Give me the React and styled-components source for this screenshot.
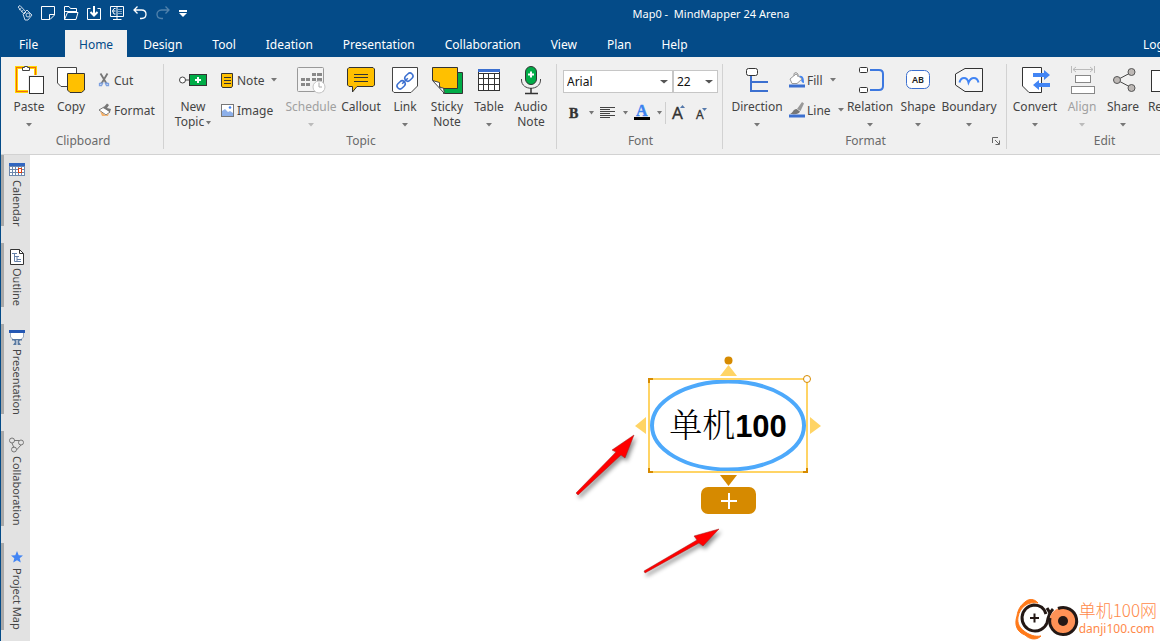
import React from 'react';
import styled, { createGlobalStyle } from 'styled-components';

const GlobalStyle = createGlobalStyle`
    * {
        box-sizing: border-box;
    }

    body {
        margin: 0;
        overflow: hidden;
        background: #FFFFFF;
        font-family: 'Noto Sans', 'Noto Sans CJK SC', sans-serif;
        font-size: 12px;
        color: #444444;
    }

    button,
    select {
        margin: 0;
        padding: 0;
        border: none;
        background: none;
        font: inherit;
        color: inherit;
    }

    svg {
        display: block;
        flex: none;
        overflow: visible;
    }
`;

const Window = styled.div`
    display: flex;
    flex-direction: column;
    height: 100vh;
    overflow: hidden;
    border-left: 1px solid #044B88;
`;

const TitleBar = styled.header`
    display: flex;
    align-items: center;
    height: 26px;
    padding-left: 12px;
    background: #044B88;
    color: #FFFFFF;
`;

const QuickButton = styled.button`
    width: ${props => props.$narrow ? '18px' : '23px'};
    height: 20px;
    display: flex;
    align-items: center;
    justify-content: center;
    opacity: ${props => props.disabled ? 0.3 : 1};
`;

const Title = styled.h1`
    flex: 1;
    margin: 0;
    padding-left: 70px;
    text-align: center;
    font-size: 11px;
    font-weight: 400;
    white-space: pre;
`;

const TabBar = styled.nav`
    display: flex;
    height: 31px;
    padding: 4px 0 0 4px;
    overflow: hidden;
    background: #044B88;
`;

const Tab = styled.button`
    flex: none;
    height: 27px;
    margin-right: 2px;
    padding: 2px 14px 0;
    white-space: nowrap;
    background: ${props => props.$active ? '#F0F0F0' : 'transparent'};
    color: ${props => props.$active ? '#044B88' : '#FFFFFF'};
`;

const FileTab = styled(Tab)`
    width: 58px;
    text-align: left;
`;

const LoginButton = styled(Tab)`
    width: 17px;
    margin: 0 0 0 auto;
    padding: 2px 0 0;
    text-align: left;
`;

const Ribbon = styled.div`
    display: flex;
    flex: none;
    height: 98px;
    padding-top: 7px;
    overflow: hidden;
    background: #F0F0F0;
    border-bottom: 1px solid #D2D2D2;
`;

const Group = styled.section`
    flex: none;
    width: ${props => props.$width}px;
    height: 85px;
    display: flex;
    flex-direction: column;
    border-right: 1px solid #D2D2D2;
`;

const GroupBody = styled.div`
    display: flex;
    height: 69px;
    padding-left: ${props => props.$pad || 7}px;
`;

const GroupFooter = styled.div`
    display: grid;
    grid-template-columns: 1fr auto 1fr;
    align-items: center;
    height: 16px;
    padding-right: 6px;
    padding-left: 8px;
    line-height: 16px;
    color: #6A6A6A;
`;

const GroupLabel = styled.span`
    grid-column: 2;
`;

const Launcher = styled.button`
    justify-self: end;
`;

const BigButton = styled.button`
    flex: none;
    display: flex;
    flex-direction: column;
    align-items: center;
    width: ${props => props.$width || 42}px;
    line-height: 15px;
    color: ${props => props.disabled ? '#A0A0A0' : '#444444'};
`;

const BigLabel = styled.span`
    margin: 3px 0 9px;
    white-space: pre;
    text-align: center;
`;

const InlineCaret = styled.span`
    display: inline-block;
    margin-left: 2px;
    vertical-align: middle;
`;

const SmallColumn = styled.div`
    flex: none;
    width: ${props => props.$width}px;
    padding: 1px 0 0 ${props => props.$pad}px;
`;

const SmallButton = styled.button`
    display: flex;
    align-items: center;
    height: 30px;
    white-space: nowrap;
`;

const SmallLabel = styled.span`
    margin: 0 7px 0 2px;
`;

const FontPanel = styled.div`
    flex: 1;
    padding: 6px 4px 0 0;
`;

const SelectRow = styled.div`
    display: flex;
`;

const SelectBox = styled.label`
    display: grid;
    align-items: center;
    width: ${props => props.$width}px;
    height: 23px;
    border: 1px solid #C6C6C6;
    background: #FFFFFF;

    > * {
        grid-area: 1 / 1;
    }

    svg {
        justify-self: end;
        margin-right: 4px;
        pointer-events: none;
    }
`;

const Select = styled.select`
    width: 100%;
    height: 100%;
    padding-left: 3px;
    appearance: none;
    font-size: 12px;
    color: #111111;
`;

const FormatRow = styled.div`
    display: flex;
    align-items: center;
    height: 24px;
    margin-top: 8px;
`;

const FormatButton = styled.button`
    display: flex;
    align-items: center;
    justify-content: space-between;
    width: ${props => props.$width}px;
    height: 22px;
    padding-left: ${props => props.$pad || 4}px;
`;

const RowDivider = styled.span`
    width: 1px;
    height: 22px;
    margin-left: 3px;
    background: #CFCFCF;
`;

const Main = styled.main`
    flex: 1;
    display: flex;
    min-height: 0;
`;

const SideBar = styled.aside`
    flex: none;
    display: flex;
    flex-direction: column;
    align-items: stretch;
    gap: 17px;
    width: 29px;
    overflow: hidden;
    background: #E2E2E2;
`;

const SideTab = styled.button`
    flex: none;
    display: flex;
    flex-direction: column;
    align-items: center;
    gap: 3px;
    padding: 6px 1px 0 0;
    border-left: 3px solid #A9A9A9;
`;

const SideLabel = styled.span`
    writing-mode: vertical-rl;
    font-size: 11px;
    line-height: 16px;
    white-space: nowrap;
`;

const Canvas = styled.div`
    position: relative;
    flex: 1;
    overflow: hidden;
    background: #FFFFFF;
`;

const Topic = styled.div`
    position: absolute;
    left: 600px;
    top: 195px;
    width: 196px;
    height: 140px;
`;

const TopicText = styled.div`
    position: absolute;
    inset: 49px 0 auto 0;
    text-align: center;
    font-family: 'Liberation Sans', 'Noto Sans CJK SC', sans-serif;
    font-size: 31px;
    font-weight: 700;
    line-height: 48px;
    color: #000000;
`;

const TopicHan = styled.span`
    font-family: 'Noto Serif CJK SC', 'Noto Sans CJK SC', sans-serif;
    font-size: 33px;
    font-weight: 300;
`;

const AddButton = styled.button`
    position: absolute;
    left: 671px;
    top: 332px;
    display: flex;
    align-items: center;
    justify-content: center;
    width: 55px;
    height: 27px;
    border-radius: 7px;
    background: #D68A00;
`;

const Pointer = styled.svg`
    position: absolute;
    left: ${props => props.$x}px;
    top: ${props => props.$y}px;
    filter: drop-shadow(2px 3px 2px rgba(0, 0, 0, 0.45));
`;

const Watermark = styled.div`
    position: absolute;
    right: 3px;
    bottom: 1px;
    display: flex;
    align-items: center;
    color: #FF8A4A;
    white-space: nowrap;
`;

const WatermarkName = styled.div`
    font-family: 'Noto Sans CJK SC', sans-serif;
    font-size: 17px;
    font-weight: 300;
    line-height: 20px;
`;

const WatermarkSite = styled.div`
    font-family: 'Noto Sans', sans-serif;
    font-size: 12px;
    line-height: 17px;
`;

const Caret = ({ color = '#777777', size = 6 }) => (
    <svg width={size} height='4' viewBox='0 0 6 4' preserveAspectRatio='none'>
        <path d='M0 0H6L3 3.5Z' fill={color} />
    </svg>
);

const Icon = ({ size = 32, children, ...rest }) => (
    <svg width={size} height={size} viewBox={`0 0 ${size} ${size}`} fill='none' {...rest}>
        {children}
    </svg>
);

const PasteIcon = () => (
    <Icon>
        <rect x='4' y='4' width='18' height='23' fill='#FFF' stroke='#FFD800' strokeWidth='4' />
        <rect x='3.5' y='3.5' width='19' height='24' stroke='#F26A10' />
        <rect x='5' y='5' width='16' height='21' fill='#FFF' />
        <path d='M15 11H25V31H15Z' fill='#F0F0F0' />
        <path d='M9.5 6.5V3.5H11.5V2.5H14.5V3.5H16.5V6.5Z' fill='#FFF' stroke='#444' />
        <rect x='16.5' y='12.5' width='14' height='17' fill='#FFF' stroke='#333' />
    </Icon>
);

const CopyIcon = () => (
    <Icon>
        <path d='M2.5 3.5H21.5V22.5H6L2.5 19Z' fill='#FFF' stroke='#444' />
        <path d='M12.5 9.5H29.5V26L26.5 28.5H15L12.5 26Z' fill='#FFC000' stroke='#333' />
    </Icon>
);

const CutIcon = () => (
    <Icon size={14}>
        <path d='M2.5 0.5L7 8L8.5 10.5M9.5 0.5L5 8L3.5 10.5' stroke='#777' strokeWidth='1.8' />
        <path d='M3.5 10L1.500 10.500V12.500H3.500L5 9.500M8 10L10.500 10.500V12.500H8.500L7 9.500' stroke='#7CA0E0' strokeWidth='1.300' />
    </Icon>
);

const BrushIcon = () => (
    <Icon size={14}>
        <path d='M1 7L8 12L12 9L6 4Z' fill='#FFF' stroke='#777' />
        <path d='M5 5L9 0.5L11 2L9 5L13 6L12 9Z' fill='#777' />
        <path d='M2 8L8 12.5L11 10L10 13H4Z' fill='#F6B26B' />
    </Icon>
);

const NewTopicIcon = () => (
    <Icon>
        <circle cx='5.5' cy='16' r='3' fill='#FFF' stroke='#444' />
        <path d='M8.5 16H12' stroke='#444' />
        <rect x='12.5' y='10.5' width='17' height='11' fill='#00AC47' stroke='#333' />
        <path d='M18 16H24M21 13V19' stroke='#FFF' strokeWidth='2' />
    </Icon>
);

const NoteIcon = () => (
    <Icon size={15}>
        <path d='M1.5 0.5H12.5V13L11.5 14.5H2.5L1.5 13Z' fill='#FFC000' stroke='#333' />
        <path d='M4 4.5H11M4 7.5H11M4 10.5H11' stroke='#333' />
    </Icon>
);

const ImageIcon = () => (
    <Icon size={15}>
        <rect x='1.5' y='1.5' width='12' height='12' fill='#FFF' stroke='#777' />
        <path d='M2 8L5 6L8 9L10 8L13 10V13H2Z' fill='#8DB0EA' />
        <circle cx='10' cy='4.5' r='1.3' fill='#4285F4' />
    </Icon>
);

const ScheduleIcon = () => (
    <Icon>
        <rect x='2.5' y='3.5' width='26' height='24' rx='1' fill='#F3F3F3' stroke='#999' />
        <path d='M17 10.5H21M22 10.5H27M6 15.5H10M11 15.5H15M17 15.5H21M22 15.5H27M6 20.5H10M11 20.5H15' stroke='#888' strokeWidth='3' />
        <circle cx='24' cy='23' r='6' fill='#FFF' stroke='#C4C4C4' />
        <path d='M24 18.5V23H27' stroke='#AAA' />
    </Icon>
);

const CalloutIcon = () => (
    <Icon>
        <path d='M4 3.5H28L29.5 5V21L28 22.5H12L7.5 28V22.5H4L2.5 21V5Z' fill='#FFC000' stroke='#333' />
        <path d='M9 10.5H23M9 13.5H23M9 17.5H23' stroke='#333' />
    </Icon>
);

const LinkIcon = () => (
    <Icon>
        <path d='M3.5 3.5H28.5V22L22 28.5H5L3.5 27Z' fill='#FFF' stroke='#444' />
        <g transform='rotate(-45 16 17)' stroke='#3C70D0' strokeWidth='1.500'>
            <rect x='6' y='14' width='9' height='6' rx='3' />
            <rect x='17' y='14' width='9' height='6' rx='3' />
            <path d='M12 17H20' />
        </g>
    </Icon>
);

const StickyIcon = () => (
    <Icon>
        <path d='M12.5 8.5H31.5V29.5H12.5Z' fill='#00AC47' stroke='#333' />
        <path d='M1.5 3.5H26.5V24.5H11L1.5 16Z' fill='#FFC000' stroke='#333' />
        <path d='M1.5 16.5L13.5 29.5L12.500 24L8.5 23.500V18.500Z' fill='#FFF' stroke='#444' />
    </Icon>
);

const TableIcon = () => (
    <Icon shapeRendering='crispEdges'>
        <rect x='5.5' y='5.5' width='21' height='21' fill='#FFF' stroke='#333' />
        <path d='M5 9.5H27M5 14.5H27M5 20.5H27M10.5 9V27M15.5 9V27M21.5 9V27' stroke='#333' />
        <path d='M5 6.5H27' stroke='#3C70D0' strokeWidth='3' />
    </Icon>
);

const AudioIcon = () => (
    <Icon>
        <rect x='10.5' y='2.5' width='11' height='18' rx='5.5' fill='#00AC47' stroke='#333' />
        <path d='M13 10.5H19M16 7.5V13.5' stroke='#FFF' strokeWidth='2' />
        <path d='M6.5 15V16C6.5 27 25.5 27 25.5 16V15' stroke='#444' />
        <path d='M16 24V29M10 29.5H23' stroke='#333' strokeWidth='1.500' />
    </Icon>
);

const AlignLeftIcon = () => (
    <Icon size={15} shapeRendering='crispEdges'>
        <path d='M0 1.5H15M0 3.5H10M0 5.5H15M0 7.5H10M0 9.5H15M0 11.5H10' stroke='#444' />
    </Icon>
);

const BoldIcon = () => (
    <Icon size={14}>
        <text x='1' y='12' fill='#333' stroke='#333' strokeWidth='0.400' fontFamily='Liberation Serif, serif' fontWeight='700' fontSize='14'>B</text>
    </Icon>
);

const ColorIcon = () => (
    <Icon size={16}>
        <text x='2' y='11' fill='#3B82F0' stroke='#3B82F0' strokeWidth='0.400' fontFamily='Liberation Serif, serif' fontWeight='700' fontSize='16'>A</text>
        <path d='M0 13.5H16' stroke='#000' strokeWidth='3' />
    </Icon>
);

const GrowIcon = () => (
    <Icon size={16}>
        <text x='0' y='14' fill='#333' stroke='#333' strokeWidth='0.3' fontSize='17' fontFamily='Noto Sans, sans-serif'>A</text>
        <path d='M8 3L10.5 0L13 3Z' fill='#5478AA' />
    </Icon>
);

const ShrinkIcon = () => (
    <Icon size={16}>
        <text x='1' y='14' fill='#333' stroke='#333' strokeWidth='0.3' fontSize='12' fontFamily='Noto Sans, sans-serif'>A</text>
        <path d='M7 3H12L9.5 6Z' fill='#5478AA' />
    </Icon>
);

const DirectionIcon = () => (
    <Icon>
        <path d='M10 11V28M10 18H27M10 27H27' stroke='#3C70D0' strokeWidth='2' />
        <rect x='5.5' y='4.5' width='11' height='7' rx='2' fill='#FFF' stroke='#333' />
    </Icon>
);

const FillIcon = () => (
    <Icon size={16}>
        <path d='M10 4C14 3 15 6 15 11C12 11 13 8 11 7Z' fill='#4285F4' />
        <path d='M1 7L7 2L13 7L8 11.5H3Z' fill='#FFF' stroke='#999' />
        <path d='M5 4V1.5L7 0.5L9 2V5' stroke='#999' />
        <path d='M0 14H16' stroke='#3C70D0' strokeWidth='3' />
    </Icon>
);

const LineIcon = () => (
    <Icon size={16}>
        <path d='M8 7L13 0L15 1.5L11.5 9Z' fill='#999' />
        <path d='M1 12C4 11 4 7 7.5 7L11 9.5C10 12 7 12.5 3 12Z' fill='#777' />
        <path d='M0 14H16' stroke='#3C70D0' strokeWidth='3' />
    </Icon>
);

const RelationIcon = () => (
    <Icon>
        <rect x='5.5' y='3.5' width='8' height='5' rx='1' fill='#FFF' stroke='#333' />
        <rect x='5.5' y='23.5' width='8' height='5' rx='1' fill='#FFF' stroke='#333' />
        <path d='M16 6H25Q29 6 29 10V22Q29 26 25 26H16' stroke='#3C78E0' strokeWidth='2' />
    </Icon>
);

const ShapeIcon = () => (
    <Icon>
        <rect x='4.5' y='6.5' width='23' height='18' rx='5' fill='#FFF' stroke='#3C70D0' />
        <text x='16' y='19' textAnchor='middle' fill='#222' fontSize='9' fontWeight='600' fontFamily='Noto Sans, sans-serif'>AB</text>
    </Icon>
);

const BoundaryIcon = () => (
    <Icon>
        <path d='M12 4.5H29.5V27.5H12L2.5 21V10Z' fill='#F6F6F6' stroke='#333' />
        <path d='M6.500 18.500C8 12.500 14 12.500 15.500 18.500C18 12.500 24 12.500 25.500 18.500' stroke='#4285F4' strokeWidth='2' />
    </Icon>
);

const ConvertIcon = () => (
    <Icon>
        <path d='M3.5 3.5H22.5V28.5H10L3.500 22Z' fill='#FFF' stroke='#333' />
        <path d='M14 9H25V6L31 11L25 16V13H14Z' fill='#4285F4' />
        <path d='M31 19H20V16L14 21L20 26V23H31Z' fill='#4285F4' />
    </Icon>
);

const AlignIcon = () => (
    <Icon>
        <path d='M5.5 2V9M28.5 2V9M7 5.5H27M10 3L7 5.500L10 8M24 3L27 5.500L24 8' stroke='#BBB' />
        <rect x='9.5' y='11.500' width='15' height='7' fill='#FFF' stroke='#888' />
        <rect x='5.5' y='22.500' width='23' height='7' fill='#FFF' stroke='#888' />
    </Icon>
);

const ShareIcon = () => (
    <Icon>
        <path d='M25 8L10 16L25 24' stroke='#444' />
        <circle cx='10' cy='16' r='3.500' fill='#BDB8B5' stroke='#555' />
        <circle cx='24.500' cy='8' r='3.500' fill='#BDB8B5' stroke='#555' />
        <circle cx='24.500' cy='24' r='3.500' fill='#BDB8B5' stroke='#555' />
    </Icon>
);

const BoxIcon = () => (
    <Icon>
        <rect x='12.5' y='6.5' width='18' height='21' fill='#FFF' stroke='#333' />
    </Icon>
);

const CalendarIcon = () => (
    <Icon size={16} shapeRendering='crispEdges'>
        <rect x='0' y='2' width='16' height='13' fill='#6D87AC' />
        <rect x='0' y='2' width='16' height='3' fill='#3166C0' />
        <path d='M1 6H3V8H1ZM4 6H6V8H4ZM7 6H9V8H7ZM10 6H12V8H10ZM13 6H15V8H13ZM1 9H3V11H1ZM4 9H6V11H4ZM7 9H9V11H7ZM13 9H15V11H13ZM1 12H3V14H1ZM4 12H6V14H4ZM7 12H9V14H7ZM10 12H12V14H10ZM13 12H15V14H13Z' fill='#FFF' />
        <rect x='9.5' y='7.5' width='3' height='4' fill='#FFF' stroke='#E04010' />
    </Icon>
);

const OutlineIcon = () => (
    <Icon size={16}>
        <path d='M1.5 0.500H10.500L14.500 4.500V15.500H1.500Z' fill='#FFF' stroke='#333' />
        <path d='M10.500 0.500V4.500H14.500' stroke='#333' />
        <path d='M3 4.500H8M5.500 4.500V12.500M5.500 7.500H10M8 7.500V13M8 10.500H12M5.500 12.500H12' stroke='#6580A8' />
    </Icon>
);

const PresentationIcon = () => (
    <Icon size={16}>
        <path d='M1.5 2V7L4 9.500H12L14.500 7V2Z' fill='#FFF' stroke='#9AAAC0' />
        <rect x='0' y='0' width='16' height='3' fill='#2558B4' />
        <path d='M3 9H13V10.500H11L10 12L12 15H4L6 12L5 10.500H3Z' fill='#5878A0' />
        <path d='M8 10V15' stroke='#FFF' />
    </Icon>
);

const CollabIcon = () => (
    <Icon size={16} stroke='#777'>
        <path d='M5 3.500L10 3.500M3 6L5 11M7.500 13L12 8' />
        <circle cx='3' cy='3.500' r='2.500' />
        <circle cx='12' cy='5.500' r='2.500' />
        <circle cx='5' cy='12.500' r='2.500' />
    </Icon>
);

const StarIcon = () => (
    <Icon size={16}>
        <path d='M8 2L9.700 6.200L14 6.500L10.700 9.300L11.800 13.500L8 11.200L4.200 13.500L5.300 9.300L2 6.500L6.300 6.200Z' fill='#4285F4' />
    </Icon>
);

const quickTools = [
    { name: 'Application', icon: <Icon size={16} stroke='#C9D8E8'><path d='M1 2L3 0.500L9 7L7 9Z' /><path d='M2 5L4.500 3M4 7L6.500 5' /><path d='M6 9L10 5L15 10L11 15H8Z' /><circle cx='11' cy='10' r='2' /></Icon> },
    { name: 'New', icon: <Icon size={16} stroke='#FFF'><path d='M1.500 1.500H14.500V10L10 14.500H1.500Z' /><path d='M14.500 9.500H9.500V14.500' /></Icon> },
    { name: 'Open', icon: <Icon size={16} stroke='#FFF'><path d='M1.500 14.500V1.500H6L7.500 3.500H13.500V7.500M1.500 14.500L4.500 7.500H15L13 14.500ZM1.500 6.500H13.500' /></Icon> },
    { name: 'Save', icon: <Icon size={16} stroke='#FFF'><path d='M4.500 3.500H1.500V14.500H14.500V3.500H11.500' /><path d='M8 1V10M4.500 7L8 10.500L11.500 7' strokeWidth='2' /></Icon> },
    { name: 'Present', icon: <Icon size={16} stroke='#FFF'><path d='M1.500 1.500H14.500V11.500H1.500ZM8 1V15M4 14.500H12.500M6.500 3.500H5L3.500 6L5 9H6.500M3.500 6H6.500' /><path d='M9.500 4.500H13M9.500 6.500H13M9.500 8.500H13' strokeDasharray='1 1' /></Icon> },
    { name: 'Undo', icon: <Icon size={16} stroke='#FFF' strokeWidth='1.300'><path d='M5.500 1.500L2 5L5.500 8.500M2 5H9.500C15.500 5 15.500 13.500 9.500 13.500H8' /></Icon> },
    { name: 'Redo', disabled: true, icon: <Icon size={16} stroke='#FFF' strokeWidth='1.300'><path d='M10.500 1.500L14 5L10.500 8.500M14 5H6.500C0.500 5 0.500 13.500 6.500 13.500H8' /></Icon> },
    { name: 'Customize', narrow: true, icon: <svg width='8' height='7' viewBox='0 0 8 7'><path d='M0 0H8V2H0ZM0 3H8L4 7Z' fill='#FFF' /></svg> },
];

const tabs = ['Home', 'Design', 'Tool', 'Ideation', 'Presentation', 'Collaboration', 'View', 'Plan', 'Help'];

const sideTabs = [
    { name: 'Calendar', icon: <CalendarIcon /> },
    { name: 'Outline', icon: <OutlineIcon /> },
    { name: 'Presentation', icon: <PresentationIcon /> },
    { name: 'Collaboration', icon: <CollabIcon /> },
    { name: 'Project Map', icon: <StarIcon /> },
];

const Big = ({ icon, label, caret, width, disabled }) => (
    <BigButton $width={width} disabled={disabled}>
        {icon}
        <BigLabel>{label}</BigLabel>
        {caret && <Caret color={disabled ? '#BBBBBB' : '#777777'} />}
    </BigButton>
);

const Small = ({ icon, label, caret }) => (
    <SmallButton>
        {icon}
        <SmallLabel>{label}</SmallLabel>
        {caret && <Caret />}
    </SmallButton>
);

const RibbonGroup = ({ label, width, pad, launcher, children }) => (
    <Group $width={width} aria-label={label}>
        <GroupBody $pad={pad}>{children}</GroupBody>
        <GroupFooter>
            <GroupLabel>{label}</GroupLabel>
            {launcher && (
                <Launcher aria-label='Format settings'>
                    <Icon size={8} stroke='#666'>
                        <path d='M0.500 6V0.500H6M3 3L7 7M7.500 3.500V7.500H3.500' />
                    </Icon>
                </Launcher>
            )}
        </GroupFooter>
    </Group>
);

const App = () => (
    <Window>
        <GlobalStyle />
        <TitleBar>
            {quickTools.map(tool => (
                <QuickButton key={tool.name} aria-label={tool.name} disabled={tool.disabled} $narrow={tool.narrow}>
                    {tool.icon}
                </QuickButton>
            ))}
            <Title>{'Map0 -  MindMapper 24 Arena'}</Title>
        </TitleBar>
        <TabBar>
            <FileTab>File</FileTab>
            {tabs.map(tab => <Tab key={tab} $active={tab === 'Home'}>{tab}</Tab>)}
            <LoginButton>Log</LoginButton>
        </TabBar>
        <Ribbon>
            <RibbonGroup label='Clipboard' width={163}>
                <Big icon={<PasteIcon />} label='Paste' caret />
                <Big icon={<CopyIcon />} label='Copy' />
                <SmallColumn $width={70} $pad={6}>
                    <Small icon={<CutIcon />} label='Cut' />
                    <Small icon={<BrushIcon />} label='Format' />
                </SmallColumn>
            </RibbonGroup>
            <RibbonGroup label='Topic' width={393} pad={8}>
                <BigButton>
                    <NewTopicIcon />
                    <BigLabel>
                        {'New\nTopic'}
                        <InlineCaret><Caret size={5} /></InlineCaret>
                    </BigLabel>
                </BigButton>
                <SmallColumn $width={70} $pad={6}>
                    <Small icon={<NoteIcon />} label='Note' caret />
                    <Small icon={<ImageIcon />} label='Image' />
                </SmallColumn>
                <Big icon={<ScheduleIcon />} label='Schedule' width={54} caret disabled />
                <Big icon={<CalloutIcon />} label='Callout' width={46} />
                <Big icon={<LinkIcon />} label='Link' caret />
                <Big icon={<StickyIcon />} label={'Sticky\nNote'} />
                <Big icon={<TableIcon />} label='Table' caret />
                <Big icon={<AudioIcon />} label={'Audio\nNote'} />
            </RibbonGroup>
            <RibbonGroup label='Font' width={166} pad={6}>
                <FontPanel>
                    <SelectRow>
                        <SelectBox $width={110}>
                            <Select aria-label='Font family' defaultValue='Arial'>
                                <option>Arial</option>
                            </Select>
                            <Caret size={8} color='#555555' />
                        </SelectBox>
                        <SelectBox $width={45}>
                            <Select aria-label='Font size' defaultValue='22'>
                                <option>22</option>
                            </Select>
                            <Caret size={8} color='#555555' />
                        </SelectBox>
                    </SelectRow>
                    <FormatRow>
                        <FormatButton aria-label='Bold' $width={31} $pad={5}><BoldIcon /><Caret size={5} /></FormatButton>
                        <FormatButton aria-label='Align text' $width={34} $pad={6}><AlignLeftIcon /><Caret size={5} /></FormatButton>
                        <FormatButton aria-label='Font color' $width={34} $pad={6}><ColorIcon /><Caret size={5} /></FormatButton>
                        <RowDivider />
                        <FormatButton aria-label='Grow font' $width={24} $pad={6}><GrowIcon /></FormatButton>
                        <FormatButton aria-label='Shrink font' $width={22} $pad={5}><ShrinkIcon /></FormatButton>
                    </FormatRow>
                </FontPanel>
            </RibbonGroup>
            <RibbonGroup label='Format' width={284} launcher>
                <Big icon={<DirectionIcon />} label='Direction' width={54} caret />
                <SmallColumn $width={59} $pad={5}>
                    <Small icon={<FillIcon />} label='Fill' caret />
                    <Small icon={<LineIcon />} label='Line' caret />
                </SmallColumn>
                <Big icon={<RelationIcon />} label='Relation' width={54} caret />
                <Big icon={<ShapeIcon />} label='Shape' caret />
                <Big icon={<BoundaryIcon />} label='Boundary' width={60} caret />
            </RibbonGroup>
            <RibbonGroup label='Edit' width={194} pad={1}>
                <Big icon={<ConvertIcon />} label='Convert' width={54} caret />
                <Big icon={<AlignIcon />} label='Align' width={40} caret disabled />
                <Big icon={<ShareIcon />} label='Share' caret />
                <Big icon={<BoxIcon />} label='Re' width={22} />
            </RibbonGroup>
        </Ribbon>
        <Main>
            <SideBar>
                {sideTabs.map(tab => (
                    <SideTab key={tab.name}>
                        {tab.icon}
                        <SideLabel>{tab.name}</SideLabel>
                    </SideTab>
                ))}
            </SideBar>
            <Canvas>
                <Topic>
                    <svg width='196' height='140' viewBox='0 0 196 140' fill='none'>
                        <ellipse cx='98' cy='75.500' rx='76' ry='44' stroke='#4DA9FB' strokeWidth='4' />
                        <rect x='19' y='29' width='158' height='93' stroke='#FFD465' strokeWidth='2' />
                        <path d='M19 33V29H23M19 118V122H23M177 118V122H173' stroke='#D68A00' strokeWidth='2' />
                        <circle cx='177' cy='29' r='3.500' fill='#FFF' stroke='#D68A00' />
                        <circle cx='98.500' cy='10.500' r='4' fill='#D68A00' />
                        <path d='M98.500 15L107 26H90ZM5 76L16 67V84ZM191 76L180 67V84Z' fill='#FFD465' />
                        <path d='M90 125H107L98.500 136Z' fill='#D68A00' />
                    </svg>
                    <TopicText><TopicHan>单机</TopicHan>100</TopicText>
                </Topic>
                <AddButton aria-label='Add topic'>
                    <svg width='16' height='16' viewBox='0 0 16 16'>
                        <path d='M0 8H16M8 0V16' stroke='#FFF' strokeWidth='2' />
                    </svg>
                </AddButton>
                <Pointer width='70' height='70' viewBox='0 0 70 70' $x={541} $y={275}>
                    <path d='M5 63L45 22L41 20L63 5L54 28L50 25L7 65Z' fill='#F00' stroke='#A02020' strokeWidth='0.500' />
                </Pointer>
                <Pointer width='90' height='55' viewBox='0 0 90 55' $x={609} $y={369}>
                    <path d='M5 47L58 16L55 12L80 5L64 22L60 19L6 49Z' fill='#F00' stroke='#A02020' strokeWidth='0.500' />
                </Pointer>
                <Watermark>
                    <svg width='66' height='44' viewBox='0 0 66 44' fill='none'>
                        <path d='M12 6C16 2 22 3 25 7C15 5 7 11 5 21C4 28 7 32 11 35C16 39 22 41 28 40C23 45 16 43 12 39C4 36 1 29 4 20C5 13 8 9 12 6Z' fill='#FF7A1A' stroke='#FF7A1A' />
                        <path d='M33 18C31 11 26 9 21 9A13 13 0 1 0 34 27C35 21 37 16 40 13' stroke='#231815' strokeWidth='3' />
                        <path d='M17 22H26M21.500 17.500V26.500' stroke='#231815' strokeWidth='2' />
                        <circle cx='50' cy='25' r='13.500' fill='#FF9256' />
                        <path d='M45 12.500A13.500 13.500 0 1 1 37 22' stroke='#231815' strokeWidth='3' />
                        <path d='M34 12L37 17' stroke='#231815' strokeWidth='3' />
                        <circle cx='50' cy='25' r='5' fill='#231815' />
                    </svg>
                    <div>
                        <WatermarkName>单机100网</WatermarkName>
                        <WatermarkSite>danji100.com</WatermarkSite>
                    </div>
                </Watermark>
            </Canvas>
        </Main>
    </Window>
);

export default App;
